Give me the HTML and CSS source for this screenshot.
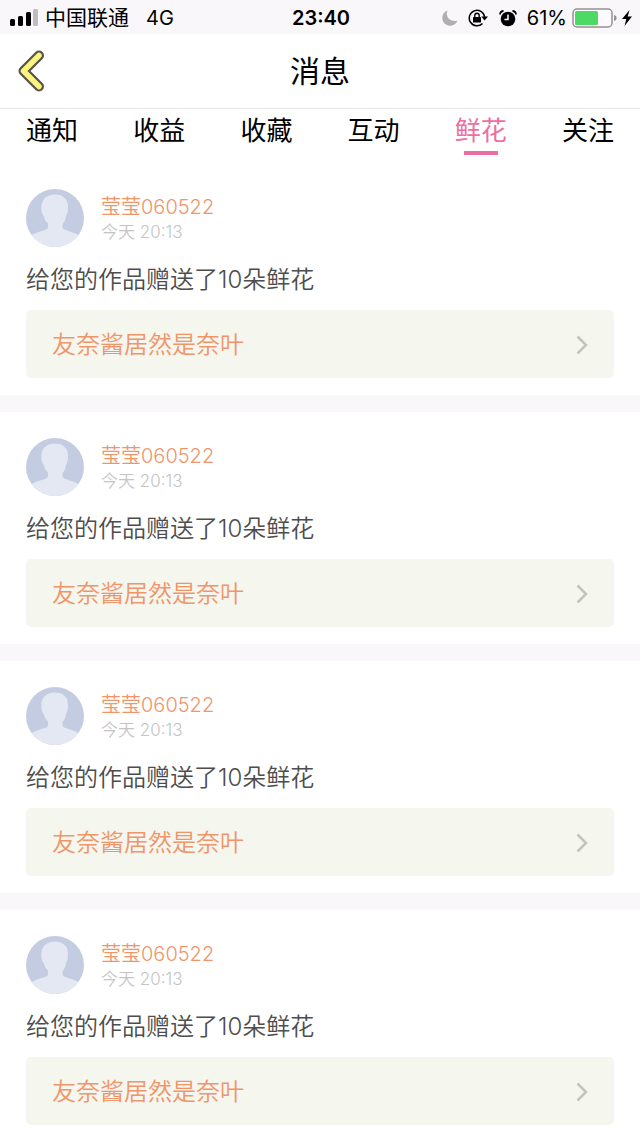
FILE: index.html
```html
<!DOCTYPE html>
<html lang="zh-CN">
<head>
    <meta charset="UTF-8">
    <meta name="viewport" content="width=device-width, initial-scale=1">
    <title>消息</title>
    <link rel="stylesheet" href="styles.css">
</head>
<body>
<!-- 头像和箭头图标 -->
<svg class="symbols" aria-hidden="true">
    <symbol id="avatar" viewBox="0 0 58 58">
        <rect width="58" height="58" fill="#c3cce1"/>
        <path d="M0 49C5 46 9 44 14 42.500C19 41 22 40.500 22 38V34.500C19.500 32.500 18.500 30 18 27.500C15.500 25 15 20 15.500 16C16.500 9 22 5.500 29 5.500C36.500 5.500 42 10 42 17C42 22 41.500 25 40 27C39.500 31 38 33.500 36.500 35V38C36.500 40.500 40 41 44 42.500C49 44 53 46 58 49V58H0Z" fill="#e3e8f3"/>
    </symbol>
    <symbol id="arrow" viewBox="0 0 12 20">
        <path d="M1.500 1.500L10 10L1.500 18.500" fill="none" stroke="#c3c4bf" stroke-width="2.500"/>
    </symbol>
</svg>
<div class="status">
    <div class="status-left">
        <svg class="signal" viewBox="0 0 28 18" aria-hidden="true">
            <rect x="0" y="10" width="5" height="7" rx="1.500"/>
            <rect x="8" y="7" width="5" height="10" rx="1.500"/>
            <rect x="16" y="3" width="5" height="14" rx="1.500"/>
            <rect x="23" y="0" width="5" height="17" rx="1.500" fill="#bfbdbf"/>
        </svg>
        <span class="carrier">中国联通</span>
        <span>4G</span>
    </div>
    <div class="status-time">23:40</div>
    <div class="status-right">
        <svg class="moon" viewBox="0 0 16 16" aria-hidden="true">
            <path d="M5.500 0.500C3 6 7 12 15.500 11C14 14 11 15.700 8 15.700C3.500 15.700 0.300 12.200 0.300 8C0.300 4.500 2.500 1.500 5.500 0.500Z" fill="#b0aeb0"/>
        </svg>
        <svg class="lock" viewBox="0 0 20 18" aria-hidden="true">
            <path d="M14.500 14.400A7.700 7.700 0 1 1 16.600 8" fill="none" stroke="#000" stroke-width="1.500"/>
            <path d="M13.200 7.500H20L16.600 11.500Z"/>
            <rect x="5" y="8" width="8" height="5.500" rx="0.500"/>
            <path d="M6.800 8.500V6.500A2.200 2.200 0 0 1 11.200 6.500V8.500" fill="none" stroke="#000" stroke-width="1.400"/>
        </svg>
        <svg class="alarm" viewBox="0 0 18 17" aria-hidden="true">
            <circle cx="9" cy="9" r="7.300"/>
            <path d="M1 4.500C1 2.500 2.500 1 4.500 1M17 4.500C17 2.500 15.500 1 13.500 1" fill="none" stroke="#000" stroke-width="1.800"/>
            <path d="M9 4.500V9.500H5.500" fill="none" stroke="#fff" stroke-width="1.500"/>
        </svg>
        <span class="percent">61%</span>
        <svg class="battery" viewBox="0 0 46 20" aria-hidden="true">
            <rect x="1" y="1" width="39" height="18" rx="4" fill="#fcfafc" stroke="#929193" stroke-width="1.500"/>
            <rect x="3" y="3" width="23" height="14" rx="1.500" fill="#4cd964"/>
            <path d="M42 7C45.500 7.500 45.500 12.500 42 13Z" fill="#929193"/>
        </svg>
        <svg class="bolt" viewBox="0 0 10 16" aria-hidden="true">
            <path d="M7.500 0L0 9H4.300L2.500 16L10 6.500H5.700Z"/>
        </svg>
    </div>
</div>
<header class="header">
    <button class="back" type="button" aria-label="返回">
        <svg viewBox="0 0 28 42" aria-hidden="true">
            <path d="M21 5.500L5.500 21L21 36.500" fill="none" stroke="#57554a" stroke-width="10" stroke-linecap="round" stroke-linejoin="round"/>
            <path d="M21 5.500L5.500 21L21 36.500" fill="none" stroke="#fbf47f" stroke-width="5.500" stroke-linecap="round" stroke-linejoin="round"/>
        </svg>
    </button>
    <h1 class="title">消息</h1>
</header>
<nav class="tabs">
    <a class="tab" href="#">通知</a>
    <a class="tab" href="#">收益</a>
    <a class="tab" href="#">收藏</a>
    <a class="tab" href="#">互动</a>
    <a class="tab active" href="#" aria-current="page">鲜花</a>
    <a class="tab" href="#">关注</a>
</nav>
<main>
    <article class="card">
        <div class="user">
            <svg class="avatar" aria-hidden="true"><use href="#avatar"/></svg>
            <div>
                <div class="name">莹莹060522</div>
                <div class="date">今天 20:13</div>
            </div>
        </div>
        <p class="message">给您的作品赠送了10朵鲜花</p>
        <a class="work" href="#">友奈酱居然是奈叶<svg class="arrow" aria-hidden="true"><use href="#arrow"/></svg></a>
    </article>
    <article class="card">
        <div class="user">
            <svg class="avatar" aria-hidden="true"><use href="#avatar"/></svg>
            <div>
                <div class="name">莹莹060522</div>
                <div class="date">今天 20:13</div>
            </div>
        </div>
        <p class="message">给您的作品赠送了10朵鲜花</p>
        <a class="work" href="#">友奈酱居然是奈叶<svg class="arrow" aria-hidden="true"><use href="#arrow"/></svg></a>
    </article>
    <article class="card">
        <div class="user">
            <svg class="avatar" aria-hidden="true"><use href="#avatar"/></svg>
            <div>
                <div class="name">莹莹060522</div>
                <div class="date">今天 20:13</div>
            </div>
        </div>
        <p class="message">给您的作品赠送了10朵鲜花</p>
        <a class="work" href="#">友奈酱居然是奈叶<svg class="arrow" aria-hidden="true"><use href="#arrow"/></svg></a>
    </article>
    <article class="card">
        <div class="user">
            <svg class="avatar" aria-hidden="true"><use href="#avatar"/></svg>
            <div>
                <div class="name">莹莹060522</div>
                <div class="date">今天 20:13</div>
            </div>
        </div>
        <p class="message">给您的作品赠送了10朵鲜花</p>
        <a class="work" href="#">友奈酱居然是奈叶<svg class="arrow" aria-hidden="true"><use href="#arrow"/></svg></a>
    </article>
</main>
</body>
</html>
```

FILE: styles.css
```css
*{
    padding: 0;
    margin: 0;
    box-sizing: border-box;
}
body{
    background: #fff;
    color: #000;
    font-family: Inter, "Noto Sans CJK SC", sans-serif;
}
a{
    color: inherit;
    text-decoration: none;
}
svg{
    display: block;
    flex: none;
}
.symbols{
    position: absolute;
    width: 0;
    height: 0;
}
/* 状态栏 */
.status{
    display: grid;
    grid-template-columns: 1fr auto 1fr;
    align-items: center;
    height: 34px;
    padding: 0 8px 0 10px;
    background: #f9f7f9;
    font-size: 20px;
    line-height: 36px;
}
.status-left,
.status-right{
    display: flex;
    align-items: center;
}
.status-right{
    justify-content: flex-end;
}
.signal{
    width: 28px;
    height: 18px;
    margin-right: 7px;
}
.carrier{
    margin-right: 17px;
    font-size: 21px;
}
.status-time{
    font-weight: 600;
}
.moon{
    width: 16px;
    height: 16px;
    margin-right: 10px;
}
.lock{
    width: 20px;
    height: 18px;
    margin-right: 11px;
}
.alarm{
    width: 18px;
    height: 17px;
    margin-right: 10px;
}
.percent{
    margin-right: 5px;
}
.battery{
    width: 46px;
    height: 20px;
    margin-right: 4px;
}
.bolt{
    width: 10px;
    height: 16px;
}
/* 标题栏 */
.header{
    display: grid;
    grid-template-columns: 1fr auto 1fr;
    align-items: center;
    height: 75px;
    padding: 0 18px;
    border-bottom: 1px solid #e5e5e5;
}
.back{
    width: 28px;
    height: 42px;
    border: 0;
    background: none;
    cursor: pointer;
}
.title{
    font-size: 30px;
    font-weight: 400;
    line-height: 42px;
}
.tabs{
    display: flex;
    justify-content: space-between;
    height: 54px;
    padding: 2px 26px 0;
    font-size: 26px;
    line-height: 40px;
}
.tab{
    display: flex;
    flex-direction: column;
    align-items: center;
}
.active{
    color: #ed6ea0;
}
.active::after{
    content: "";
    width: 34px;
    height: 4px;
    background: #ed6ea0;
}
/* 消息列表 */
.card{
    padding: 26px 26px 17px;
    border-bottom: 17px solid #f9f7f9;
    font-weight: 350;
}
.card:last-child{
    padding-bottom: 12px;
    border-bottom: 0;
}
.user{
    display: flex;
    align-items: center;
    gap: 17px;
}
.avatar{
    width: 58px;
    height: 58px;
    border-radius: 50%;
}
.name{
    padding-top: 2px;
    color: #ef956a;
    font-size: 20px;
    line-height: 26px;
}
.date{
    color: #c4c4c4;
    font-size: 17px;
    line-height: 24px;
}
.message{
    margin: 17px 0 15px;
    color: #4d4d4d;
    font-size: 24px;
    line-height: 31px;
}
.work{
    display: flex;
    align-items: center;
    justify-content: space-between;
    height: 68px;
    padding: 2px 26px 0;
    border-radius: 5px;
    background: #f5f6ee;
    color: #ef956a;
    font-size: 24px;
    line-height: 34px;
}
.arrow{
    width: 12px;
    height: 20px;
}
```
